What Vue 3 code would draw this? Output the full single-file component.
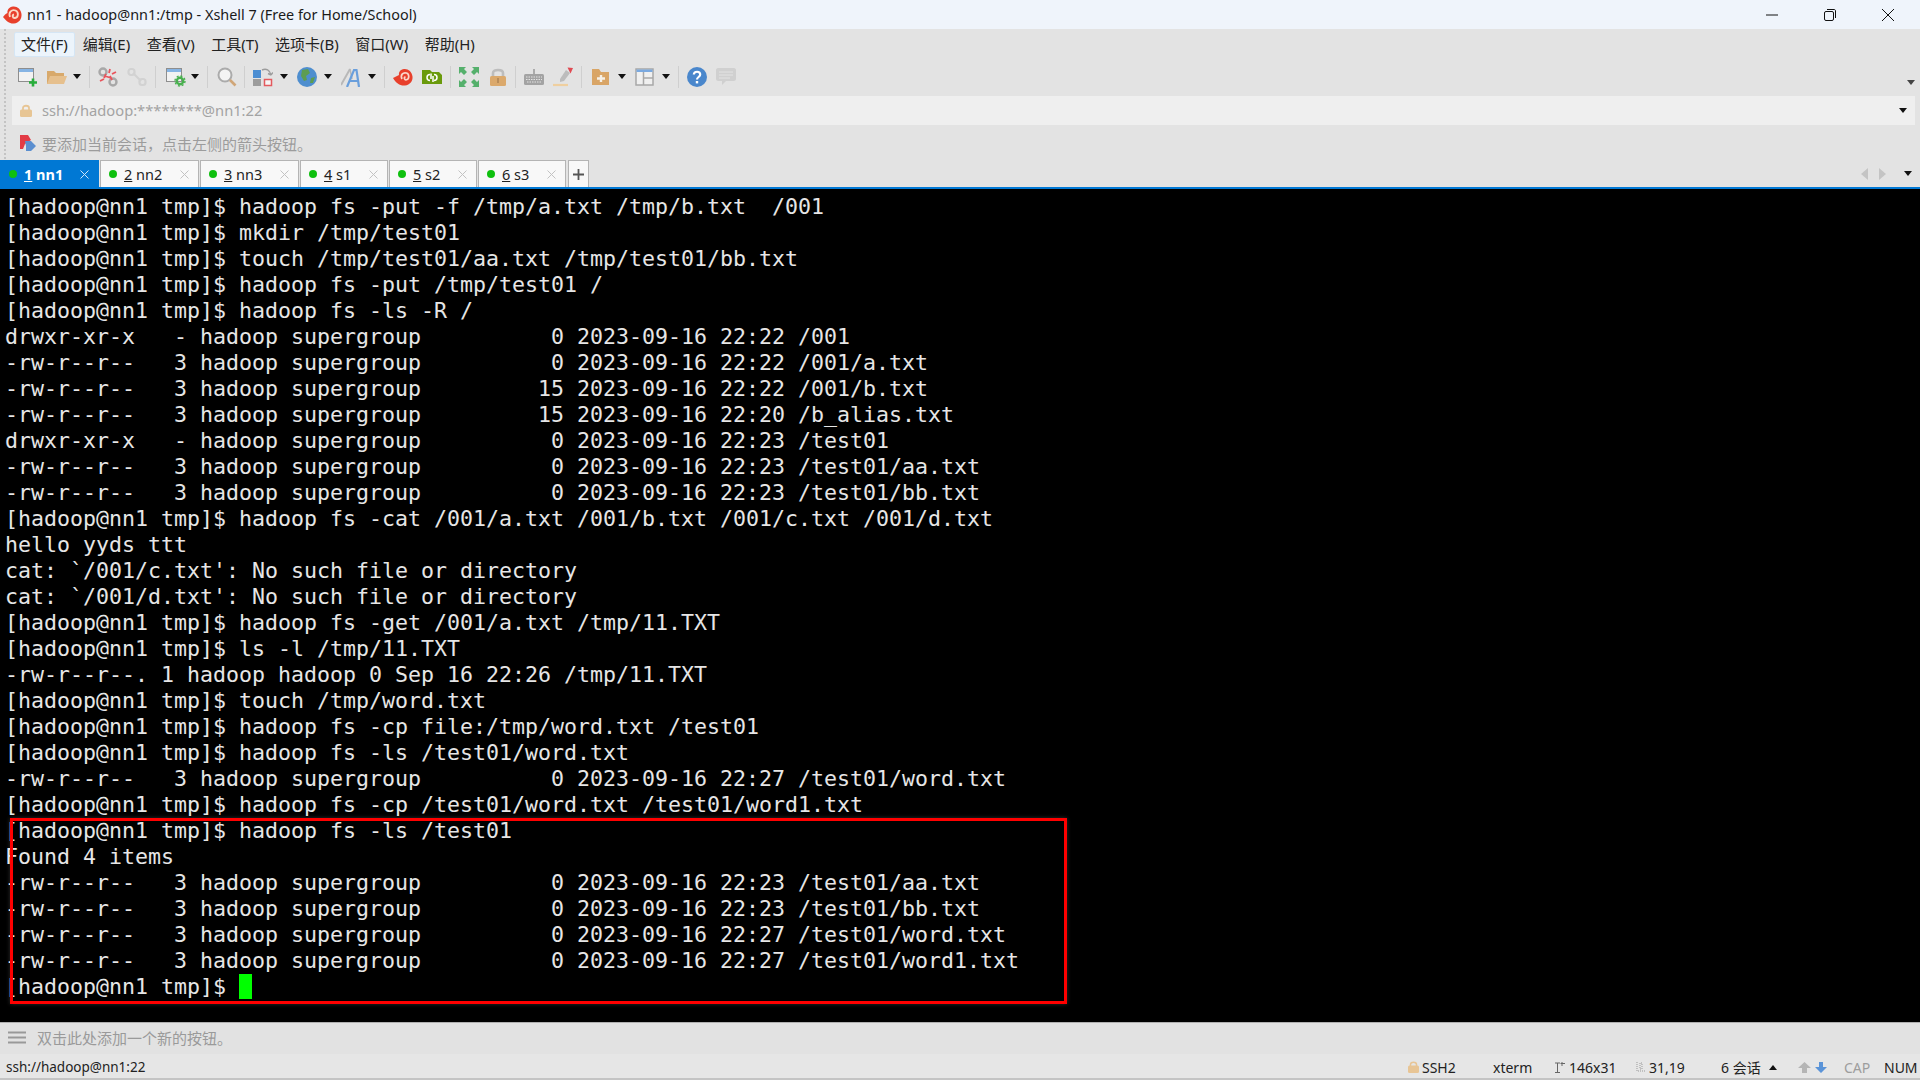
<script setup>
const menus = [
  { t: '文件(F)', cls: 'on' }, { t: '编辑(E)' }, { t: '查看(V)' }, { t: '工具(T)' },
  { t: '选项卡(B)' }, { t: '窗口(W)' }, { t: '帮助(H)' }
]
const tabs = [
  { n: '1', l: ' nn1', w: 99, active: true },
  { n: '2', l: ' nn2', w: 99 },
  { n: '3', l: ' nn3', w: 99 },
  { n: '4', l: ' s1', w: 88 },
  { n: '5', l: ' s2', w: 88 },
  { n: '6', l: ' s3', w: 88 }
]
const P = '[hadoop@nn1 tmp]$ '
const lines = [
  P + 'hadoop fs -put -f /tmp/a.txt /tmp/b.txt  /001',
  P + 'mkdir /tmp/test01',
  P + 'touch /tmp/test01/aa.txt /tmp/test01/bb.txt',
  P + 'hadoop fs -put /tmp/test01 /',
  P + 'hadoop fs -ls -R /',
  'drwxr-xr-x   - hadoop supergroup          0 2023-09-16 22:22 /001',
  '-rw-r--r--   3 hadoop supergroup          0 2023-09-16 22:22 /001/a.txt',
  '-rw-r--r--   3 hadoop supergroup         15 2023-09-16 22:22 /001/b.txt',
  '-rw-r--r--   3 hadoop supergroup         15 2023-09-16 22:20 /b_alias.txt',
  'drwxr-xr-x   - hadoop supergroup          0 2023-09-16 22:23 /test01',
  '-rw-r--r--   3 hadoop supergroup          0 2023-09-16 22:23 /test01/aa.txt',
  '-rw-r--r--   3 hadoop supergroup          0 2023-09-16 22:23 /test01/bb.txt',
  P + 'hadoop fs -cat /001/a.txt /001/b.txt /001/c.txt /001/d.txt',
  'hello yyds ttt',
  "cat: `/001/c.txt': No such file or directory",
  "cat: `/001/d.txt': No such file or directory",
  P + 'hadoop fs -get /001/a.txt /tmp/11.TXT',
  P + 'ls -l /tmp/11.TXT',
  '-rw-r--r--. 1 hadoop hadoop 0 Sep 16 22:26 /tmp/11.TXT',
  P + 'touch /tmp/word.txt',
  P + 'hadoop fs -cp file:/tmp/word.txt /test01',
  P + 'hadoop fs -ls /test01/word.txt',
  '-rw-r--r--   3 hadoop supergroup          0 2023-09-16 22:27 /test01/word.txt',
  P + 'hadoop fs -cp /test01/word.txt /test01/word1.txt',
  P + 'hadoop fs -ls /test01',
  'Found 4 items',
  '-rw-r--r--   3 hadoop supergroup          0 2023-09-16 22:23 /test01/aa.txt',
  '-rw-r--r--   3 hadoop supergroup          0 2023-09-16 22:23 /test01/bb.txt',
  '-rw-r--r--   3 hadoop supergroup          0 2023-09-16 22:27 /test01/word.txt',
  '-rw-r--r--   3 hadoop supergroup          0 2023-09-16 22:27 /test01/word1.txt'
]
</script>

<template>
  <div class="win">
    <header class="title">
      <svg class="logo" viewBox="0 0 20 20" width="20" height="20">
        <path d="M1 12C4 16 8 19 12 18.500C17 18 20 14 19.500 9C19 4 15 1 11 1.500C7 2 5 5 5.500 8C3.500 9 2 10.500 1 12Z" fill="#e8402c"/>
        <path d="M8 12C6 7 10 4 13.500 5.500C17 7 16.500 12.500 13 13C10.500 13.300 9.800 10 12 9.300" fill="none" stroke="#fbd9c6" stroke-width="1.800"/>
      </svg>
      <span class="title-text">nn1 - hadoop@nn1:/tmp - Xshell 7 (Free for Home/School)</span>
      <div class="win-btns">
        <svg width="14" height="14" viewBox="0 0 14 14"><path d="M1 7H13" stroke="#111" stroke-width="1"/></svg>
        <svg width="14" height="14" viewBox="0 0 14 14"><rect x="1.500" y="3.500" width="9" height="9" rx="1.500" fill="none" stroke="#111"/><path d="M4 1.500H11C12 1.500 12.500 2 12.500 3V10" fill="none" stroke="#111"/></svg>
        <svg width="14" height="14" viewBox="0 0 14 14"><path d="M1 1L13 13M13 1L1 13" stroke="#111" stroke-width="1"/></svg>
      </div>
    </header>

    <div class="upper">
      <nav class="menu">
        <span v-for="m in menus" :key="m.t" class="mi" :class="m.cls">{{ m.t }}</span>
      </nav>

      <div class="tools">
        <svg class="ic" viewBox="0 0 20 20"><rect x="0.500" y="1.500" width="15" height="13" fill="#f2f2f2" stroke="#8e8e8e"/><rect x="1" y="2" width="14" height="3" fill="#86b4e4"/><path d="M11 15.500H19M15 11.500V19.500" stroke="#27ae3b" stroke-width="2.600"/></svg>
        <svg class="ic nudge" viewBox="0 0 20 20"><path d="M0 4H7L9 6H17V17H0Z" fill="#d8a96b"/><path d="M3 9H20L17 17H0Z" fill="#e6c08e"/></svg>
        <i class="caret"></i>
        <i class="sep"></i>
        <svg class="ic" viewBox="0 0 20 20"><circle cx="5" cy="5" r="3.500" fill="none" stroke="#a8a8a8" stroke-width="2.400"/><circle cx="15" cy="15" r="3.500" fill="none" stroke="#a8a8a8" stroke-width="2.400"/><path d="M7 9L13 11M8 7L6 11M12 9L14 13M12 2L11 6M18 5L14 7M2 14L6 12" stroke="#e8545c" stroke-width="1.800"/></svg>
        <svg class="ic" viewBox="0 0 20 20"><rect x="1.500" y="2" width="6" height="6" rx="2.500" fill="none" stroke="#d2d2d2" stroke-width="2.200"/><rect x="12.500" y="12" width="6" height="6" rx="2.500" fill="none" stroke="#d2d2d2" stroke-width="2.200"/><path d="M6 6L14 14" stroke="#d2d2d2" stroke-width="2.200"/></svg>
        <i class="sep"></i>
        <svg class="ic props" viewBox="0 0 20 20"><rect x="0.500" y="1.500" width="15" height="13" fill="#f2f2f2" stroke="#8e8e8e"/><rect x="1" y="2" width="14" height="3" fill="#86b4e4"/><circle cx="14" cy="14" r="3.200" fill="none" stroke="#48b04e" stroke-width="2.400"/><circle cx="14" cy="14" r="5" fill="none" stroke="#48b04e" stroke-width="1.400" stroke-dasharray="2 1.900"/></svg>
        <i class="caret"></i>
        <i class="sep"></i>
        <svg class="ic find" viewBox="0 0 20 20"><circle cx="8" cy="8" r="6.500" fill="#f4f4f4" stroke="#ababab" stroke-width="2"/><path d="M13 13L18.500 18.500" stroke="#d0a678" stroke-width="2.600"/></svg>
        <i class="sep"></i>
        <svg class="ic" viewBox="0 0 20 20"><rect x="0" y="3" width="8" height="8" fill="#4c8ed2"/><rect x="0" y="12" width="8" height="7" fill="#9c9c9c"/><rect x="11.500" y="12.500" width="7" height="6" fill="#f6f6f6" stroke="#e35a5e" stroke-width="1.500"/><path d="M9 3C13 1 17 3 18 8M18 8L15 6.500M18 8L20 5.500" fill="none" stroke="#9c9c9c" stroke-width="1.400"/></svg>
        <i class="caret"></i>
        <svg class="ic" viewBox="0 0 20 20"><circle cx="10" cy="10" r="10" fill="#4e8ecf"/><path d="M5 3L11 2L13 6L9 9L10 13L7 14L4 9ZM14 11L18 10L16 16L13 16Z" fill="#5d9d52"/></svg>
        <i class="caret"></i>
        <svg class="ic" viewBox="0 0 20 20"><path d="M0 18L9 2" stroke="#b8b8b8" stroke-width="2"/><path d="M9 2L11 12" stroke="#b8b8b8" stroke-width="1.500"/><path d="M6 20L13 3H15.500L18 20M8.500 14H17" fill="none" stroke="#6a9fdc" stroke-width="2.200"/></svg>
        <i class="caret"></i>
        <i class="sep"></i>
        <svg class="ic" viewBox="0 0 20 20"><path d="M0 11C3 16 7 19 12 18.500C17 18 20 14 19.500 9.500C19 4.500 15 1.500 11 2C7.500 2.500 5.500 5 6 8C4 9 2 10 0 11Z" fill="#e8402c"/><path d="M9 12C7 8 10 5 13.500 6C16.500 7 16.500 12 13.500 12.800C11.500 13.300 10.500 10.500 12.500 9.800" fill="none" stroke="#fad7cb" stroke-width="1.700"/></svg>
        <svg class="ic" viewBox="0 0 20 20"><path d="M0 3H8L10 5H17L20 8V17H0Z" fill="#6a9a0c"/><path d="M8 7.500A3 3 0 0 0 8 13.500M12 7.500A3 3 0 0 1 12 13.500M9 6.500V12M11 9V15" fill="none" stroke="#fff" stroke-width="1.500"/></svg>
        <i class="sep"></i>
        <svg class="ic" viewBox="0 0 20 20"><path d="M0 7V0H7L5 2L8 5L5 8L2 5ZM20 7V0H13L15 2L12 5L15 8L18 5ZM0 13V20H7L5 18L8 15L5 12L2 15ZM20 13V20H13L15 18L12 15L15 12L18 15Z" fill="#55b06c"/></svg>
        <svg class="ic lock" viewBox="0 0 18 20"><path d="M4 9V6C4 2 14 2 14 6V9" fill="none" stroke="#bdbdbd" stroke-width="2.600"/><rect x="1" y="9" width="16" height="10" rx="1.500" fill="#dba96c"/><rect x="8" y="11" width="2" height="5" fill="#b98d5a"/></svg>
        <i class="sep"></i>
        <svg class="ic" viewBox="0 0 20 20"><path d="M10 2V7" stroke="#999" stroke-width="1.500"/><rect x="0" y="7" width="20" height="11" rx="1.500" fill="#a3a3a3"/><path d="M2 10H18M2 12.500H18M3 15H17" stroke="#e3e3e3" stroke-width="1" stroke-dasharray="1.500 1"/></svg>
        <svg class="ic" viewBox="0 0 20 20"><path d="M7 12L13 3L17 6L11 14L7 15Z" fill="#bcbcbc"/><path d="M14.500 0.500L20 1L17.500 6.500Z" fill="#e04a52"/><path d="M0 18H15" stroke="#efcf9f" stroke-width="2.200"/></svg>
        <i class="sep"></i>
        <svg class="ic foldplus" viewBox="0 0 20 20"><path d="M1 2H8L10 5H18V18H1Z" fill="#d9a566"/><path d="M6 11.500H14M10 8V15" stroke="#f6f0e6" stroke-width="2.400"/></svg>
        <i class="caret"></i>
        <svg class="ic" viewBox="0 0 20 20"><rect x="1" y="2" width="17" height="16" fill="#f0f0f0" stroke="#a8a8a8" stroke-width="1.500"/><rect x="1.500" y="2.500" width="16" height="2.500" fill="#7aa9e0"/><path d="M8.500 5V18M8.500 11H18" stroke="#a8a8a8" stroke-width="1.500"/></svg>
        <i class="caret"></i>
        <i class="sep"></i>
        <svg class="ic" viewBox="0 0 20 20"><circle cx="10" cy="10" r="10" fill="#4a87cc"/><path d="M6.800 7.500C7 3.800 13.200 3.800 13.200 7.500C13.200 10 10 10 10 12.500" fill="none" stroke="#fff" stroke-width="2.200"/><rect x="8.800" y="14" width="2.400" height="2.400" fill="#fff"/></svg>
        <svg class="ic" viewBox="0 0 20 20"><path d="M2 1H18C19 1 20 2 20 3V12C20 13 19 14 18 14H10L6 18V14H2C1 14 0 13 0 12V3C0 2 1 1 2 1Z" fill="#d0d0d0"/><path d="M3 5H17M3 8H17M3 11H14" stroke="#e3e3e3" stroke-width="1"/></svg>
        <i class="caret end tool-end"></i>
      </div>

      <div class="addr">
        <svg width="12" height="13" viewBox="0 0 12 13"><path d="M3 6V4C3 1 9 1 9 4V6" fill="none" stroke="#e7c594" stroke-width="1.800"/><rect x="0" y="5.500" width="12" height="7.500" rx="1.500" fill="#e7c594"/></svg>
        <span class="addr-text">ssh://hadoop:********@nn1:22</span>
        <i class="caret end addr-end"></i>
      </div>

      <div class="links">
        <svg width="16" height="17" viewBox="0 0 16 17"><path d="M0 0H8L11 5L5 9L3 14H0Z" fill="#e23b45"/><path d="M5 6H11L16 11L11 16H6V11Z" fill="#5b8fd0"/></svg>
        <span>要添加当前会话，点击左侧的箭头按钮。</span>
      </div>

      <div class="tabs">
        <div v-for="t in tabs" :key="t.n" class="tab" :class="{ active: t.active }" :style="{ width: t.w + 'px' }">
          <i class="dot"></i>
          <span class="tab-label"><u>{{ t.n }}</u>{{ t.l }}</span>
          <svg class="x" width="9" height="9" viewBox="0 0 9 9"><path d="M0.500 0.500L8.500 8.500M8.500 0.500L0.500 8.500" stroke="currentColor" stroke-width="1"/></svg>
        </div>
        <div class="plus"><svg width="11" height="11" viewBox="0 0 11 11"><path d="M0 5.500H11M5.500 0V11" stroke="#555" stroke-width="1.800"/></svg></div>
        <div class="tab-nav">
          <svg width="7" height="12" viewBox="0 0 7 12"><path d="M7 0V12L0 6Z" fill="#c4c4c4"/></svg>
          <svg width="7" height="12" viewBox="0 0 7 12"><path d="M0 0V12L7 6Z" fill="#c4c4c4"/></svg>
          <i class="caret"></i>
        </div>
      </div>
    </div>

    <main class="term">
      <div v-for="(l, i) in lines" :key="i" class="ln">{{ l }}</div>
      <div class="ln">[hadoop@nn1 tmp]$ <span class="cur">&nbsp;</span></div>
      <div class="redbox"></div>
    </main>

    <div class="quick">
      <svg width="18" height="13" viewBox="0 0 18 13"><path d="M0 1.500H18M0 6.500H18M0 11.500H18" stroke="#999" stroke-width="2"/></svg>
      <span>双击此处添加一个新的按钮。</span>
    </div>

    <footer class="status">
      <span class="s-conn">ssh://hadoop@nn1:22</span>
      <svg class="s-lock" width="11" height="12" viewBox="0 0 11 12"><path d="M2.500 5V3.500C2.500 0.500 8.500 0.500 8.500 3.500V5" fill="none" stroke="#e8c595" stroke-width="1.500"/><rect x="0" y="4.500" width="11" height="7.500" rx="1.500" fill="#e8c595"/></svg>
      <span class="s-ssh">SSH2</span>
      <span class="s-xterm">xterm</span>
      <svg class="s-size" width="10" height="11" viewBox="0 0 10 11"><path d="M0 1H5M2.500 1V11M0 10.500H5M7 4V0M5.500 1.500H10" fill="none" stroke="#666" stroke-width="1"/></svg>
      <span class="s-dim">146x31</span>
      <svg class="s-pos" width="9" height="10" viewBox="0 0 9 10"><path d="M1 0V9H9M4 1V7H6V1H4" fill="none" stroke="#999" stroke-width="1" stroke-dasharray="1 1"/></svg>
      <span class="s-rc">31,19</span>
      <span class="s-sess">6 会话</span>
      <i class="caret up"></i>
      <svg class="s-up" width="13" height="11" viewBox="0 0 13 11"><path d="M6.500 0L13 6H9V11H4V6H0Z" fill="#b5b5b5"/></svg>
      <svg class="s-down" width="12" height="11" viewBox="0 0 12 11"><path d="M6 11L0 5H4V0H8V5H12Z" fill="#5b94d8"/></svg>
      <span class="s-cap">CAP</span>
      <span class="s-num">NUM</span>
    </footer>
  </div>
</template>

<style>
html, body { margin: 0; background: #000; }
</style>

<style scoped>
.win {
  width: 1920px;
  height: 1080px;
  display: flex;
  flex-direction: column;
  overflow: hidden;
  background: #e3e3e3;
  font-family: "Noto Sans", "Noto Sans CJK SC", sans-serif;
}
.title {
  height: 29px;
  flex: none;
  display: flex;
  align-items: center;
  background: #eff4fb;
  padding-left: 2px;
}
.logo { flex: none; }
.title-text {
  margin-left: 5px;
  font-size: 14.4px;
  color: #1a1a1a;
}
.win-btns {
  margin-left: auto;
  display: flex;
  gap: 44px;
  padding-right: 25px;
  align-items: center;
}
.upper {
  position: relative;
  height: 158px;
  flex: none;
  display: flex;
  flex-direction: column;
}
.upper::before {
  content: "";
  position: absolute;
  left: 4px;
  top: 0;
  height: 130px;
  border-left: 2px dotted #c4c4c4;
}
.menu {
  height: 31px;
  flex: none;
  display: flex;
  align-items: center;
  padding-left: 14px;
  box-sizing: border-box;
}
.mi {
  font-size: 15px;
  color: #222;
  line-height: 23px;
  padding: 0 6px;
  margin-right: 2.5px;
  border: 1px solid transparent;
  border-radius: 2px;
  white-space: nowrap;
}
.mi.on {
  background: #ecf4fb;
  border-color: #d5e6f5;
  margin-right: 1px;
}
.tools {
  height: 36px;
  flex: none;
  box-sizing: border-box;
  display: flex;
  align-items: center;
  gap: 8px;
  padding: 0 0 3px 18px;
}
.ic { width: 20px; height: 20px; flex: none; }
.ic + .ic { margin-left: 1px; }
.caret + .ic { margin-left: 1px; }
.nudge { margin-right: -1px; }
.props { margin-left: 2px; margin-right: -2px; }
.find { margin-left: 1px; margin-right: -1px; }
.foldplus { margin-left: 1px; }
.ic + .lock { width: 18px; margin-left: 2px; }
.caret {
  width: 0;
  height: 0;
  flex: none;
  border-left: 4px solid transparent;
  border-right: 4px solid transparent;
  border-top: 5px solid #111;
  margin-left: -1px;
}
.caret.end { margin-left: auto; }
.tool-end {
  margin-right: 5px;
  margin-top: 12px;
  border-top-color: #444;
}
.addr-end { margin-right: 8px; }
.sep {
  width: 1px;
  height: 22px;
  flex: none;
  background: #cfcfcf;
}
.addr {
  height: 29px;
  flex: none;
  box-sizing: border-box;
  margin: 0 5px 0 12px;
  background: #efefef;
  display: flex;
  align-items: center;
  padding: 0 0 1px 8px;
}
.addr-text {
  margin-left: 10px;
  margin-bottom: 1px;
  font-size: 14.7px;
  color: #a3a3a3;
}
.links {
  height: 35px;
  flex: none;
  box-sizing: border-box;
  display: flex;
  align-items: center;
  padding: 1px 0 0 20px;
  font-size: 15px;
  color: #9c9c9c;
}
.links span { margin-left: 6px; }
.tabs {
  height: 27px;
  flex: none;
  display: flex;
  gap: 1px;
}
.tab {
  position: relative;
  box-sizing: border-box;
  background: #f8f8f8;
  border: 1px solid #b4b4b4;
  border-bottom: none;
  display: flex;
  align-items: center;
  padding-left: 8px;
  color: #222;
}
.tab.active {
  background: #0078d4;
  border-color: #0078d4;
  color: #fff;
  font-weight: 700;
}
.dot {
  width: 8px;
  height: 8px;
  border-radius: 50%;
  background: #0fc00f;
  flex: none;
}
.tab-label {
  margin-left: 7px;
  font-size: 14.5px;
  white-space: pre;
}
.x {
  position: absolute;
  right: 9px;
  top: 9px;
  color: #c2c2c2;
}
.tab.active .x { color: #cfe6f8; }
.plus {
  width: 21px;
  margin-left: 1px;
  box-sizing: border-box;
  border: 1px solid #b4b4b4;
  border-bottom: none;
  background: #f8f8f8;
  display: flex;
  align-items: center;
  justify-content: center;
}
.tab-nav {
  margin-left: auto;
  display: flex;
  align-items: center;
  gap: 11px;
  padding-right: 8px;
}
.tab-nav .caret { margin-left: 7px; }
.term {
  position: relative;
  height: 835px;
  flex: none;
  box-sizing: border-box;
  background: #000;
  border-top: 2px solid #0078d4;
  padding: 5px 0 0 5px;
  color: #e6e6e6;
  font-family: "DejaVu Sans Mono", monospace;
  font-size: 21.6px;
  line-height: 26px;
}
.ln {
  height: 26px;
  white-space: pre;
}
.cur { background: #00ff00; }
.redbox {
  position: absolute;
  left: 10px;
  top: 629px;
  width: 1057px;
  height: 186px;
  box-sizing: border-box;
  border: 3px solid #ff0000;
  box-shadow: 0 0 4px rgba(255, 255, 255, 0.18);
}
.quick {
  height: 32px;
  flex: none;
  box-sizing: border-box;
  border-top: 1px solid #b0b0b0;
  background: #e2e2e2;
  display: flex;
  align-items: center;
  padding: 0 0 2px 8px;
  font-size: 15px;
  color: #9a9a9a;
}
.quick span { margin-left: 11px; }
.status {
  height: 26px;
  flex: none;
  box-sizing: border-box;
  background: #e6e6e6;
  border-bottom: 2px solid #c4c4c4;
  display: flex;
  align-items: center;
  padding: 2px 0 0 6px;
  font-size: 14px;
  color: #222;
  white-space: nowrap;
}
.s-conn { width: 1402px; font-size: 13.5px; }
.s-ssh { margin-left: 3px; width: 71px; }
.s-xterm { width: 62px; }
.s-size { margin-right: 4px; }
.s-dim { width: 67px; }
.s-pos { margin-right: 4px; }
.s-rc { width: 72px; }
.s-sess { width: 48px; }
.caret.up {
  border-top: none;
  border-bottom: 5px solid #111;
  margin-left: 0;
}
.s-up { margin-left: 21px; }
.s-down { margin-left: 4px; }
.s-cap { margin-left: 17px; color: #9d9d9d; width: 40px; }
.s-num { color: #222; }
</style>
